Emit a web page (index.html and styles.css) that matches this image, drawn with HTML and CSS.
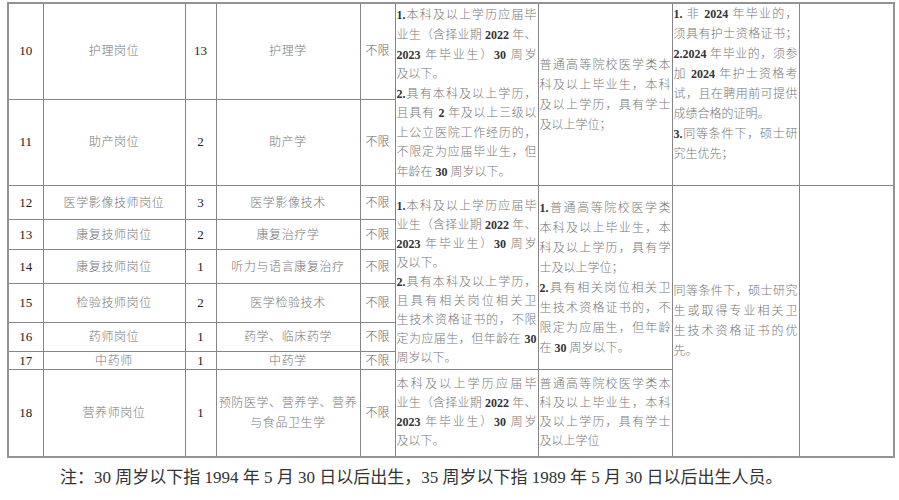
FILE: index.html
```html
<!DOCTYPE html>
<html lang="zh-CN">
<head>
<meta charset="utf-8">
<title>岗位表</title>
<link rel="stylesheet" href="styles.css">
</head>
<body>
<div class="page">
<table class="grid">
<colgroup>
<col class="c-no"><col class="c-post"><col class="c-num"><col class="c-major"><col class="c-sex"><col class="c-edu"><col class="c-deg"><col class="c-other"><col class="c-note">
</colgroup>
<tbody>
<tr class="r10">
<td class="no">10</td><td class="name">护理岗位</td><td class="no">13</td><td class="name">护理学</td><td class="lim">不限</td>
<td class="txt lh20 tight" rowspan="2">
<span class="ln"><b class="d">1.</b>本科及以上学历应届毕</span>
<span class="ln">业生（含择业期 <b class="d">2022</b> 年、</span>
<span class="ln"><b class="d">2023</b> 年毕业生）<b class="d">30</b> 周岁</span>
<span class="ln end">及以下。</span>
<span class="ln"><b class="d">2.</b>具有本科及以上学历，</span>
<span class="ln">且具有 <b class="d">2</b> 年及以上三级以</span>
<span class="ln">上公立医院工作经历的，</span>
<span class="ln">不限定为应届毕业生，但</span>
<span class="ln end">年龄在 <b class="d">30</b> 周岁以下。</span>
</td>
<td class="txt lh20" rowspan="2">
<span class="ln">普通高等院校医学类本</span>
<span class="ln">科及以上毕业生，本科</span>
<span class="ln">及以上学历，具有学士</span>
<span class="ln end">及以上学位；</span>
</td>
<td class="txt lh20 raise" rowspan="2">
<span class="ln"><b class="d">1.</b> 非 <b class="d">2024</b> 年毕业的，</span>
<span class="ln">须具有护士资格证书；</span>
<span class="ln"><b class="d">2.2024</b> 年毕业的，须参</span>
<span class="ln">加 <b class="d">2024</b> 年护士资格考</span>
<span class="ln">试，且在聘用前可提供</span>
<span class="ln end">成绩合格的证明。</span>
<span class="ln"><b class="d">3.</b>同等条件下，硕士研</span>
<span class="ln end">究生优先；</span>
</td>
<td class="blank" rowspan="2"></td>
</tr>
<tr class="r11">
<td class="no">11</td><td class="name">助产岗位</td><td class="no">2</td><td class="name">助产学</td><td class="lim">不限</td>
</tr>
<tr class="r12">
<td class="no">12</td><td class="name">医学影像技师岗位</td><td class="no">3</td><td class="name">医学影像技术</td><td class="lim">不限</td>
<td class="txt lh19 down" rowspan="6">
<span class="ln"><b class="d">1.</b>本科及以上学历应届毕</span>
<span class="ln">业生（含择业期 <b class="d">2022</b> 年、</span>
<span class="ln"><b class="d">2023</b> 年毕业生）<b class="d">30</b> 周岁</span>
<span class="ln end">及以下。</span>
<span class="ln"><b class="d">2.</b>具有本科及以上学历，</span>
<span class="ln">且具有相关岗位相关卫</span>
<span class="ln">生技术资格证书的，不限</span>
<span class="ln">定为应届生，但年龄在 <b class="d">30</b></span>
<span class="ln end">周岁以下。</span>
</td>
<td class="txt lh20" rowspan="6">
<span class="ln"><b class="d">1.</b>普通高等院校医学类</span>
<span class="ln">本科及以上毕业生，本</span>
<span class="ln">科及以上学历，具有学</span>
<span class="ln end">士及以上学位；</span>
<span class="ln"><b class="d">2.</b>具有相关岗位相关卫</span>
<span class="ln">生技术资格证书的，不</span>
<span class="ln">限定为应届生，但年龄</span>
<span class="ln end">在 <b class="d">30</b> 周岁以下。</span>
</td>
<td class="txt lh20" rowspan="7">
<span class="ln">同等条件下，硕士研究</span>
<span class="ln">生或取得专业相关卫</span>
<span class="ln">生技术资格证书的优</span>
<span class="ln end">先。</span>
</td>
<td class="blank" rowspan="7"></td>
</tr>
<tr class="r13">
<td class="no">13</td><td class="name">康复技师岗位</td><td class="no">2</td><td class="name">康复治疗学</td><td class="lim">不限</td>
</tr>
<tr class="r14">
<td class="no">14</td><td class="name">康复技师岗位</td><td class="no">1</td><td class="name">听力与语言康复治疗</td><td class="lim">不限</td>
</tr>
<tr class="r15">
<td class="no">15</td><td class="name">检验技师岗位</td><td class="no">2</td><td class="name">医学检验技术</td><td class="lim">不限</td>
</tr>
<tr class="r16">
<td class="no">16</td><td class="name">药师岗位</td><td class="no">1</td><td class="name">药学、临床药学</td><td class="lim">不限</td>
</tr>
<tr class="r17">
<td class="no">17</td><td class="name">中药师</td><td class="no">1</td><td class="name">中药学</td><td class="lim">不限</td>
</tr>
<tr class="r18">
<td class="no">18</td><td class="name">营养师岗位</td><td class="no">1</td><td class="name lh20">预防医学、营养学、营养<br>与食品卫生学</td><td class="lim">不限</td>
<td class="txt lh19">
<span class="ln">本科及以上学历应届毕</span>
<span class="ln">业生（含择业期 <b class="d">2022</b> 年、</span>
<span class="ln"><b class="d">2023</b> 年毕业生）<b class="d">30</b> 周岁</span>
<span class="ln end">及以下。</span>
</td>
<td class="txt lh19">
<span class="ln">普通高等院校医学类本</span>
<span class="ln">科及以上毕业生，本科</span>
<span class="ln">及以上学历，具有学士</span>
<span class="ln end">及以上学位</span>
</td>
</tr>
</tbody>
</table>
<p class="foot">注：30 周岁以下指 1994 年 5 月 30 日以后出生，35 周岁以下指 1989 年 5 月 30 日以后出生人员。</p>
</div>
</body>
</html>
```

FILE: styles.css
```css
html, body {
  margin: 0;
  padding: 0;
  background: #ffffff;
}

.page {
  padding: 2px 0 0 7px;
  font-family: "Liberation Serif", "Noto Sans CJK SC", serif;
}

.grid {
  border-collapse: collapse;
  table-layout: fixed;
  width: 886px;
  border: 2px solid #939393;
}

.c-no { width: 35px; }
.c-post { width: 142px; }
.c-num { width: 31px; }
.c-major { width: 144px; }
.c-sex { width: 35px; }
.c-edu { width: 143px; }
.c-deg { width: 134px; }
.c-other { width: 127px; }
.c-note { width: 95px; }

.grid td {
  border: 1px solid #858585;
  padding: 0;
  vertical-align: middle;
}

.r10 { height: 95px; }
.r11 { height: 85px; }
.r12 { height: 34px; }
.r13 { height: 30px; }
.r14 { height: 34px; }
.r15 { height: 39px; }
.r16 { height: 29px; }
.r17 { height: 18px; }
.r18 { height: 87px; }

.no {
  text-align: center;
  font-size: 13px;
  color: #222;
  line-height: 16px;
}

.name {
  text-align: center;
  font-size: 12px;
  letter-spacing: 0.6px;
  color: #777;
  line-height: 16px;
  font-weight: 300;
}

.lim {
  text-align: center;
  font-size: 12px;
  color: #666;
  line-height: 16px;
  font-weight: 300;
}

.grid td.txt {
  font-size: 12px;
  color: #777;
  font-weight: 300;
  padding: 0 1px;
}

.grid td.lh20 { line-height: 20px; }
.grid td.lh19 { line-height: 19px; }
.grid td.tight { line-height: 19.6px; }

.grid td.down { padding-top: 9px; }
.grid td.raise { padding-bottom: 21px; }

.ln {
  display: block;
  text-align: justify;
  text-align-last: justify;
}

.ln.end {
  text-align-last: left;
}

.d {
  font-weight: bold;
  color: #333;
}

.foot {
  margin: 8px 0 0 53px;
  font-size: 17px;
  line-height: 24px;
  color: #333;
}
```
